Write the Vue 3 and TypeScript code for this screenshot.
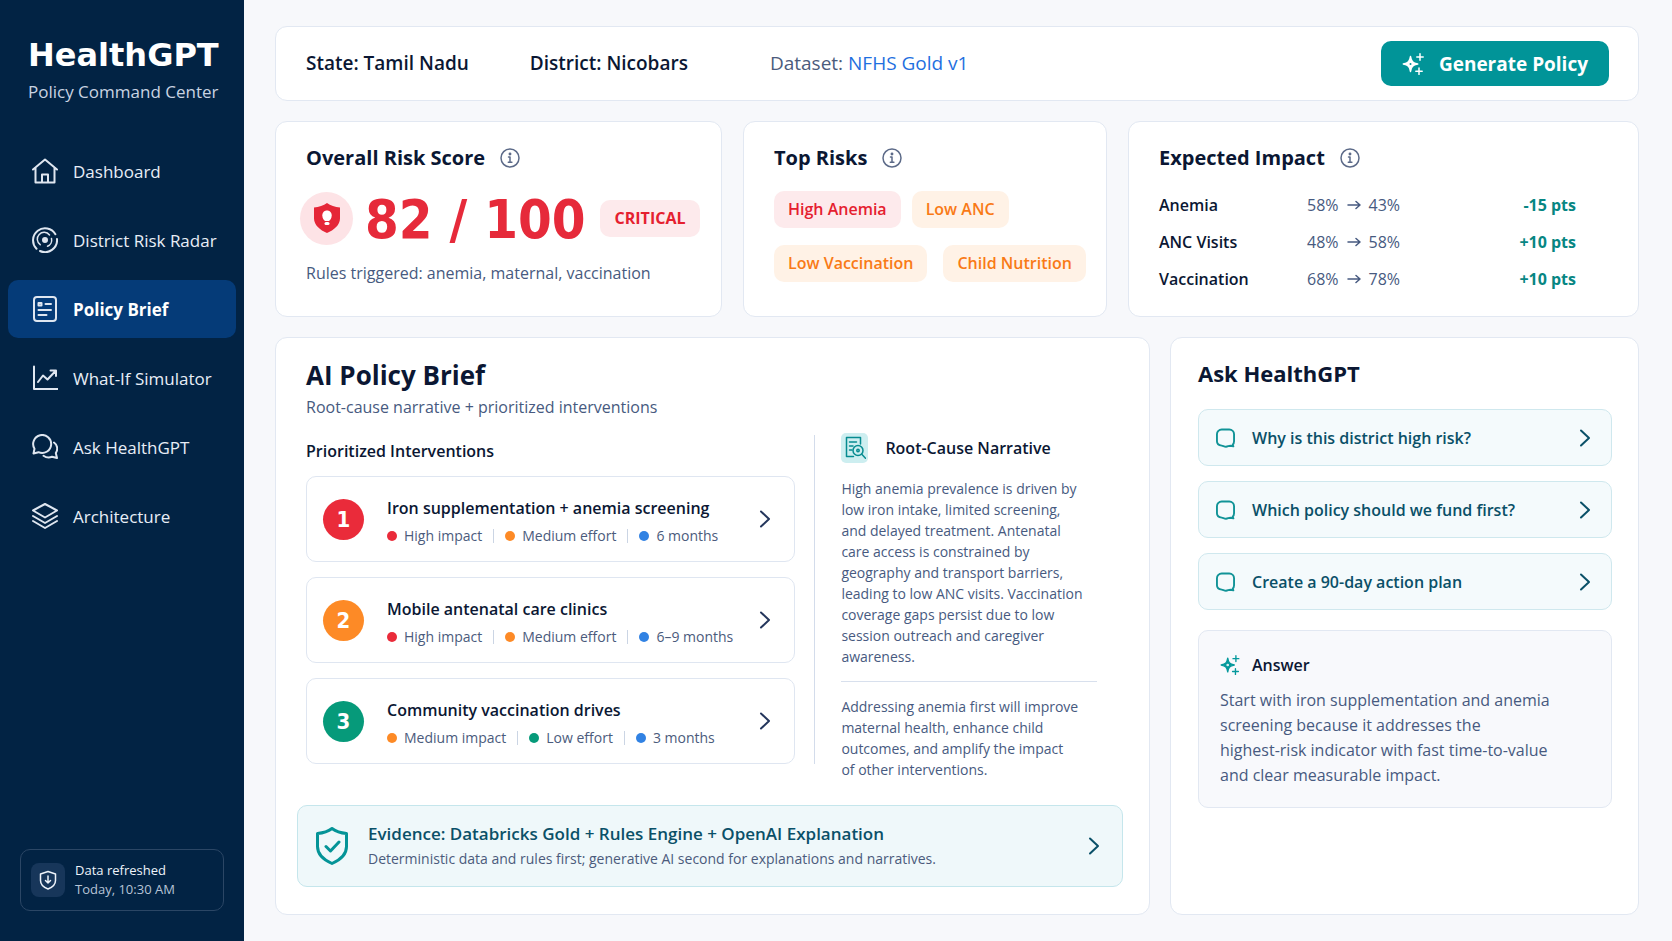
<script setup lang="ts">
interface Meta { tone: string; text: string }
interface Intervention { title: string; tone: string; meta: Meta[] }

const nav: { id: string; label: string }[] = [
  { id: 'home', label: 'Dashboard' },
  { id: 'radar', label: 'District Risk Radar' },
  { id: 'brief', label: 'Policy Brief' },
  { id: 'chart', label: 'What-If Simulator' },
  { id: 'chat', label: 'Ask HealthGPT' },
  { id: 'layers', label: 'Architecture' },
]
const active = 'brief'

const impact = [
  { name: 'Anemia', from: '58%', to: '43%', delta: '-15 pts' },
  { name: 'ANC Visits', from: '48%', to: '58%', delta: '+10 pts' },
  { name: 'Vaccination', from: '68%', to: '78%', delta: '+10 pts' },
]

const interventions: Intervention[] = [
  {
    title: 'Iron supplementation + anemia screening',
    tone: 'red',
    meta: [
      { tone: 'red', text: 'High impact' },
      { tone: 'orange', text: 'Medium effort' },
      { tone: 'blue', text: '6 months' },
    ],
  },
  {
    title: 'Mobile antenatal care clinics',
    tone: 'orange',
    meta: [
      { tone: 'red', text: 'High impact' },
      { tone: 'orange', text: 'Medium effort' },
      { tone: 'blue', text: '6–9 months' },
    ],
  },
  {
    title: 'Community vaccination drives',
    tone: 'green',
    meta: [
      { tone: 'orange', text: 'Medium impact' },
      { tone: 'green', text: 'Low effort' },
      { tone: 'blue', text: '3 months' },
    ],
  },
]

const questions: string[] = [
  'Why is this district high risk?',
  'Which policy should we fund first?',
  'Create a 90-day action plan',
]
</script>

<template>
  <div class="app">
    <aside class="sidebar">
      <div class="brand">
        <div class="brand-name">HealthGPT</div>
        <div class="brand-sub">Policy Command Center</div>
      </div>
      <nav class="nav" aria-label="Main">
        <a
          v-for="item in nav"
          :key="item.id"
          href="#"
          class="nav-item"
          :class="{ active: item.id === active }"
          :aria-current="item.id === active ? 'page' : undefined"
        >
          <svg class="nav-icon" viewBox="0 0 26 26" aria-hidden="true">
            <g v-if="item.id === 'home'">
              <path d="M1 11.500 13 1.500l12 10M3.500 9.500V24.500h19V9.500M10 24.500v-8h6v8" />
            </g>
            <g v-else-if="item.id === 'radar'">
              <path d="M4.500 21.700A12 12 0 1 1 23.400 7.200M25 12A12 12 0 0 1 8 24" />
              <path d="M8.200 17.700A6.800 6.800 0 1 1 17.500 8M19.500 11.500A6.800 6.800 0 0 1 15.500 19.300" stroke-width="1.500" />
              <circle cx="13" cy="13" r="2" fill="currentColor" />
            </g>
            <g v-else-if="item.id === 'brief'">
              <rect x="2" y="1" width="22" height="24" rx="3" />
              <path d="M6.500 7h3v2.500h-3zM13.500 8h5.500M6.500 14h12.500M6.500 19h8" />
            </g>
            <g v-else-if="item.id === 'chart'">
              <path d="M2 1.500v22.500h23.500M6 17l5-6.500 4.500 4L23.500 6M18.500 5.500h5.500v5.500" />
            </g>
            <g v-else-if="item.id === 'chat'">
              <path d="M1.500 19.500 2.500 14.700A9 9 0 1 1 6.500 18.200z" />
              <path d="M22 8.500a7.500 7.500 0 0 1 1.800 10.500l1.200 5-5-1.200a9 9 0 0 1-8.500-1" />
            </g>
            <g v-else>
              <path d="M13 1 25 7.500 13 14.500 1 7.500zM1 13l12 7 12-7M1 18l12 7 12-7" />
            </g>
          </svg>
          <span>{{ item.label }}</span>
        </a>
      </nav>
      <div class="refresh">
        <span class="refresh-icon">
          <svg viewBox="0 0 18 20" width="18" height="20" aria-hidden="true">
            <path d="M9 1.500 16.500 4v6.500c0 4-3.500 7-7.500 8.500-4-1.500-7.500-4.500-7.500-8.500V4zM9 6v7M6.500 10.500 9 13l2.500-2.500" />
          </svg>
        </span>
        <div>
          <div class="refresh-title">Data refreshed</div>
          <div class="refresh-time">Today, 10:30 AM</div>
        </div>
      </div>
    </aside>

    <main class="main">
      <header class="card topbar">
        <div class="context state">State: Tamil Nadu</div>
        <div class="context district">District: Nicobars</div>
        <div class="dataset">Dataset: <a href="#">NFHS Gold v1</a></div>
        <button type="button" class="generate">
          <svg viewBox="0 0 22 22" width="22" height="22" aria-hidden="true">
            <path d="M8.500 3.500c.8 5 2.200 6.500 7.200 7.500-5 1-6.400 2.500-7.200 7.500C7.700 13.500 6.300 12 1.300 11c5-1 6.400-2.500 7.200-7.500z" fill="currentColor" />
            <circle cx="8.500" cy="11" r="1" fill="#019498" stroke="none" />
            <path d="M18 .8v6.400M14.800 4h6.400M17 15v6.400M13.800 18.200h6.400" />
          </svg>
          <span>Generate Policy</span>
        </button>
      </header>

      <div class="summary">
        <section class="card panel">
          <div class="panel-head">
            <h2>Overall Risk Score</h2>
            <button type="button" class="info" aria-label="About overall risk score">
              <svg viewBox="0 0 20 20" width="20" height="20" aria-hidden="true"><circle cx="10" cy="10" r="9" /><path d="M8.500 9H10v5M8.300 14.300h3.600" /><circle cx="10" cy="6" r=".7" fill="currentColor" /></svg>
            </button>
          </div>
          <div class="score">
            <span class="score-icon">
              <svg viewBox="0 0 28 32" width="28" height="32" aria-hidden="true">
                <path d="M14 1C17.500 3.500 22 5 27 5.500v11C27 23 21 28 14 31 7 28 1 23 1 16.500v-11C6 5 10.500 3.500 14 1z" fill="#e52637" />
                <path d="M14 8.500c-3 0-4.700 2.200-4.700 5 0 2.300 1.200 4.300 2.700 5.500h4c1.500-1.200 2.700-3.200 2.700-5.500 0-2.800-1.700-5-4.700-5z" fill="#fff" />
                <rect x="11.500" y="20" width="5" height="3" rx="1.500" fill="#fff" />
              </svg>
            </span>
            <span class="score-value">82 / 100</span>
            <span class="chip red critical">CRITICAL</span>
          </div>
          <p class="rules">Rules triggered: anemia, maternal, vaccination</p>
        </section>

        <section class="card panel">
          <div class="panel-head">
            <h2>Top Risks</h2>
            <button type="button" class="info" aria-label="About top risks">
              <svg viewBox="0 0 20 20" width="20" height="20" aria-hidden="true"><circle cx="10" cy="10" r="9" /><path d="M8.500 9H10v5M8.300 14.300h3.600" /><circle cx="10" cy="6" r=".7" fill="currentColor" /></svg>
            </button>
          </div>
          <div class="chips">
            <div class="chip-row tight">
              <span class="chip red">High Anemia</span>
              <span class="chip orange">Low ANC</span>
            </div>
            <div class="chip-row">
              <span class="chip orange">Low Vaccination</span>
              <span class="chip orange">Child Nutrition</span>
            </div>
          </div>
        </section>

        <section class="card panel">
          <div class="panel-head">
            <h2>Expected Impact</h2>
            <button type="button" class="info" aria-label="About expected impact">
              <svg viewBox="0 0 20 20" width="20" height="20" aria-hidden="true"><circle cx="10" cy="10" r="9" /><path d="M8.500 9H10v5M8.300 14.300h3.600" /><circle cx="10" cy="6" r=".7" fill="currentColor" /></svg>
            </button>
          </div>
          <table class="impact">
            <tbody>
              <tr v-for="row in impact" :key="row.name">
                <th scope="row">{{ row.name }}</th>
                <td>
                  <span class="shift">
                    {{ row.from }}
                    <svg viewBox="0 0 14 10" width="14" height="10" role="img" aria-label="to"><path d="M1 5h12M9 1.500 13 5 9 8.500" /></svg>
                    {{ row.to }}
                  </span>
                </td>
                <td class="delta">{{ row.delta }}</td>
              </tr>
            </tbody>
          </table>
        </section>
      </div>

      <div class="detail">
        <section class="card brief">
          <div class="brief-head">
            <h1>AI Policy Brief</h1>
            <p>Root-cause narrative + prioritized interventions</p>
          </div>
          <div class="brief-body">
            <div class="plan">
              <h3>Prioritized Interventions</h3>
              <button v-for="(item, i) in interventions" :key="item.title" type="button" class="step">
                <span class="step-num" :class="item.tone">{{ i + 1 }}</span>
                <span class="step-text">
                  <span class="step-title">{{ item.title }}</span>
                  <span class="step-meta">
                    <span v-for="m in item.meta" :key="m.text" class="meta">
                      <i class="dot" :class="m.tone"></i>{{ m.text }}
                    </span>
                  </span>
                </span>
                <svg class="chevron" viewBox="0 0 12 18" aria-hidden="true"><path d="M2 1.500 10 9l-8 7.500" /></svg>
              </button>
            </div>
            <div class="narrative">
              <div class="narrative-head">
                <span class="narrative-icon">
                  <svg viewBox="0 0 22 24" width="22" height="24" aria-hidden="true">
                    <path d="M16.500 8V1.500h-14v19h7M5.500 6h7M5.500 10h3.500M5.500 14h2.500" />
                    <circle cx="14" cy="14.500" r="5" /><circle cx="14" cy="14.500" r="1.200" />
                    <path d="m18 18.500 3.500 3.700" />
                  </svg>
                </span>
                <h3>Root-Cause Narrative</h3>
              </div>
              <p>
                High anemia prevalence is driven by<br />low iron intake, limited screening,<br />and delayed treatment. Antenatal<br />care access is constrained by<br />geography and transport barriers,<br />leading to low ANC visits. Vaccination<br />coverage gaps persist due to low<br />session outreach and caregiver<br />awareness.
              </p>
              <hr />
              <p>
                Addressing anemia first will improve<br />maternal health, enhance child<br />outcomes, and amplify the impact<br />of other interventions.
              </p>
            </div>
          </div>
          <button type="button" class="evidence">
            <svg class="evidence-icon" viewBox="0 0 32 38" aria-hidden="true">
              <path d="M16 1.500c4 3 9 4.500 14.500 5v13C30.500 28 24 33 16 36.500 8 33 1.500 28 1.500 19.500v-13c5.500-.5 10.500-2 14.500-5zM10 19.500l4.500 4.500 8.500-9" />
            </svg>
            <span class="evidence-text">
              <span class="evidence-title">Evidence: Databricks Gold + Rules Engine + OpenAI Explanation</span>
              <span class="evidence-sub">Deterministic data and rules first; generative AI second for explanations and narratives.</span>
            </span>
            <svg class="chevron" viewBox="0 0 12 18" aria-hidden="true"><path d="M2 1.500 10 9l-8 7.500" /></svg>
          </button>
        </section>

        <section class="card ask">
          <h2>Ask HealthGPT</h2>
          <button v-for="q in questions" :key="q" type="button" class="question">
            <svg class="bubble" viewBox="0 0 20 20" aria-hidden="true">
              <path d="M6 1h8a5 5 0 0 1 5 5v7.500c0 1.800-.8 3-1.500 3.500l.8 1.800-3.300-.6c-1.500 0-2.500.8-4.500 1-2-.2-3-1-4.500-1.200-3-.2-5-2-5-4.500V6a5 5 0 0 1 5-5z" />
            </svg>
            <span>{{ q }}</span>
            <svg class="chevron" viewBox="0 0 12 18" aria-hidden="true"><path d="M2 1.500 10 9l-8 7.500" /></svg>
          </button>
          <div class="answer">
            <div class="answer-head">
              <svg viewBox="0 0 22 22" width="20" height="20" aria-hidden="true">
                <path d="M8.500 3.500c.8 5 2.200 6.500 7.200 7.500-5 1-6.400 2.500-7.200 7.500C7.700 13.500 6.300 12 1.300 11c5-1 6.400-2.500 7.200-7.500z" fill="currentColor" />
                <circle cx="8.500" cy="11" r="1.500" fill="#d8f1f2" stroke="none" />
                <path d="M17.500 .8v6.400M14.300 4h6.400M17 15v6.400M13.800 18.200h6.400" />
              </svg>
              <h3>Answer</h3>
            </div>
            <p>
              Start with iron supplementation and anemia<br />screening because it addresses the<br />highest-risk indicator with fast time-to-value<br />and clear measurable impact.
            </p>
          </div>
        </section>
      </div>
    </main>
  </div>
</template>

<style>
body {
  margin: 0;
  background: #f7f8fb;
}
</style>

<style scoped>
.app {
  display: grid;
  grid-template-columns: 244px minmax(0, 1fr);
  min-height: 100vh;
  font-family: "Open Sans", "Noto Sans", sans-serif;
  color: #0b1733;
}
.app *,
.app {
  box-sizing: border-box;
}
h1, h2, h3, p {
  margin: 0;
  font-weight: 600;
}
p {
  font-weight: 400;
}
button {
  font: inherit;
  color: inherit;
  cursor: pointer;
  text-align: left;
}
svg {
  flex: none;
  fill: none;
  stroke: currentColor;
  stroke-width: 2;
  stroke-linecap: round;
  stroke-linejoin: round;
}

/* Sidebar */
.sidebar {
  display: flex;
  flex-direction: column;
  padding: 36px 8px 30px;
  background: #022344;
  color: #eef3fa;
}
.brand {
  padding: 0 20px;
  white-space: nowrap;
}
.brand-name {
  font: 700 32px/38px "DejaVu Sans", sans-serif;
  color: #fff;
}
.brand-sub {
  margin-top: 6px;
  font-size: 17px;
  line-height: 24px;
  color: #c9d3e2;
}
.nav {
  display: flex;
  flex-direction: column;
  gap: 11px;
  margin-top: 38px;
}
.nav-item {
  display: flex;
  align-items: center;
  gap: 15px;
  height: 58px;
  padding: 0 24px;
  border-radius: 10px;
  color: #e8eef7;
  font-size: 17px;
  text-decoration: none;
  white-space: nowrap;
}
.nav-item.active {
  background: #053b78;
  color: #fff;
  font-weight: 700;
}
.nav-icon {
  width: 26px;
  height: 26px;
  color: #dfe6f0;
}
.refresh {
  display: flex;
  align-items: center;
  gap: 10px;
  height: 62px;
  margin: auto 12px 0;
  padding: 0 10px;
  border: 1px solid #2b4665;
  border-radius: 10px;
  font-size: 13px;
  line-height: 19px;
}
.refresh-icon {
  display: grid;
  place-items: center;
  width: 34px;
  height: 34px;
  border-radius: 8px;
  background: #17365a;
}
.refresh-icon svg {
  stroke-width: 1.5;
}
.refresh-time {
  color: #b7c4d6;
}

/* Main */
.main {
  display: flex;
  flex-direction: column;
  gap: 20px;
  padding: 26px 33px 26px 31px;
}
.card {
  background: #fff;
  border: 1px solid #e2e8f2;
  border-radius: 12px;
}
.topbar {
  display: flex;
  align-items: center;
  height: 75px;
  padding: 0 29px 0 30px;
  font-size: 19px;
  line-height: 24px;
  white-space: nowrap;
}
.context {
  font-weight: 600;
}
.context,
.dataset {
  padding-bottom: 2px;
}
.state {
  margin-right: 61px;
}
.district {
  margin-right: 82px;
}
.dataset {
  color: #4b5b7c;
}
.dataset a {
  color: #1f6fe0;
  text-decoration: none;
}
.generate {
  display: flex;
  align-items: center;
  gap: 15px;
  height: 45px;
  margin-left: auto;
  padding: 0 21px;
  border: 0;
  border-radius: 10px;
  background: #019498;
  color: #fff;
  font-size: 19px;
  font-weight: 700;
}
.generate svg {
  stroke-width: 1.5;
}

.summary {
  display: grid;
  grid-template-columns: minmax(0, 447fr) minmax(0, 364fr) minmax(0, 511fr);
  gap: 21px;
}
.panel {
  min-height: 196px;
  padding: 22px 20px 16px 30px;
}
.panel-head {
  display: flex;
  align-items: center;
  gap: 15px;
  height: 28px;
}
.panel-head h2 {
  font-size: 20px;
  font-weight: 700;
  line-height: 28px;
}
.info {
  display: flex;
  padding: 0;
  border: 0;
  background: none;
  color: #5c6a88;
}
.info svg {
  stroke-width: 1.5;
}
.score {
  display: flex;
  align-items: center;
  height: 56px;
  margin: 18px 0 0 -6px;
  white-space: nowrap;
}
.score-icon {
  display: grid;
  place-items: center;
  width: 53px;
  height: 53px;
  border-radius: 50%;
  background: #fde3e6;
}
.score-icon svg {
  stroke: none;
}
.score-value {
  margin: 0 14px 0 12px;
  padding-top: 4px;
  color: #e62a3a;
  font: 700 54px/56px "DejaVu Sans Condensed", "Noto Sans", sans-serif;
}
.rules {
  margin-top: 15px;
  color: #475a80;
  font-size: 16px;
  line-height: 24px;
}
.chip {
  display: inline-flex;
  align-items: center;
  height: 37px;
  padding: 0 14px 2px;
  border-radius: 10px;
  font-size: 16px;
  font-weight: 600;
  white-space: nowrap;
}
.chip.critical {
  padding: 0 15px;
  font-weight: 700;
}
.chip.red {
  background: #fdeaec;
  color: #e5202f;
}
.chip.orange {
  background: #fff2e6;
  color: #f97a16;
}
.chips {
  display: flex;
  flex-direction: column;
  gap: 17px;
  margin-top: 19px;
}
.chip-row {
  display: flex;
  gap: 16px;
}
.chip-row.tight {
  gap: 11px;
}
.impact {
  width: calc(100% - 42px);
  margin-top: 14px;
  border-collapse: collapse;
  font-size: 16px;
}
.impact tr {
  height: 37px;
}
.impact th,
.impact td {
  padding: 0;
  text-align: left;
  font-weight: 600;
}
.impact th {
  width: 148px;
}
.impact .shift {
  display: inline-flex;
  align-items: center;
  gap: 8px;
  color: #475a80;
  font-weight: 400;
}
.impact .shift svg {
  stroke-width: 1.5;
}
.impact .delta {
  text-align: right;
  font-weight: 700;
  color: #078683;
}

.detail {
  display: grid;
  grid-template-columns: minmax(0, 875fr) minmax(0, 469fr);
  gap: 20px;
  flex: 1;
}
.brief {
  display: flex;
  flex-direction: column;
  padding: 20px 26px 27px 21px;
}
.brief-head {
  padding-left: 9px;
}
.brief-head h1 {
  font-size: 26px;
  font-weight: 700;
  line-height: 34px;
}
.brief-head p {
  margin-top: 3px;
  color: #475a80;
  font-size: 16px;
  line-height: 24px;
}
.brief-body {
  display: grid;
  grid-template-columns: minmax(0, 490fr) minmax(0, 309fr);
  column-gap: 19px;
  margin-top: 16px;
  padding-left: 9px;
}
.plan {
  display: flex;
  flex-direction: column;
  gap: 15px;
}
.plan h3 {
  margin-top: 6px;
  font-size: 16px;
  line-height: 20px;
}
.step {
  display: flex;
  align-items: center;
  height: 86px;
  padding: 0 23px 0 16px;
  border: 1px solid #dfe6f1;
  border-radius: 10px;
  background: #fff;
}
.step-num {
  display: grid;
  place-items: center;
  flex: none;
  width: 41px;
  height: 41px;
  margin-right: 23px;
  border-radius: 50%;
  color: #fff;
  font: 700 22px/41px "DejaVu Sans Condensed", "Noto Sans", sans-serif;
}
.red { background: #ea2b3a; }
.orange { background: #fd8a26; }
.green { background: #069a7a; }
.blue { background: #3182e3; }
.step-text {
  display: flex;
  flex-direction: column;
  gap: 6px;
  flex: 1;
  padding-top: 6px;
  white-space: nowrap;
}
.step-title {
  font-size: 16px;
  font-weight: 600;
  line-height: 22px;
}
.step-meta {
  display: flex;
  font-size: 14px;
  line-height: 22px;
  color: #4b5b7c;
}
.meta {
  display: flex;
  align-items: center;
}
.meta + .meta::before {
  content: "";
  width: 1px;
  height: 14px;
  margin: 0 11px;
  background: #cbd5e4;
}
.dot {
  width: 10px;
  height: 10px;
  margin-right: 7px;
  border-radius: 50%;
}
.chevron {
  width: 12px;
  height: 18px;
  color: #24365c;
}
.narrative {
  height: 329px;
  padding: 0 26px;
  border-left: 1px solid #d3dceb;
  white-space: nowrap;
}
.narrative-head {
  display: flex;
  align-items: center;
  gap: 17px;
  height: 30px;
  margin-top: -2px;
}
.narrative-head h3 {
  font-size: 16px;
}
.narrative-icon {
  display: grid;
  place-items: center;
  width: 27px;
  height: 30px;
  border-radius: 5px;
  background: #cdeef0;
  color: #068b90;
}
.narrative-icon svg {
  stroke-width: 1.5;
}
.narrative p {
  color: #475a80;
  font-size: 14px;
  line-height: 21px;
}
.narrative-head + p {
  margin-top: 15px;
}
.narrative hr {
  height: 1px;
  margin: 14px 0;
  border: 0;
  background: #d8e0ed;
}
.evidence {
  display: flex;
  align-items: center;
  height: 82px;
  margin-top: auto;
  padding: 0 22px 0 18px;
  border: 1px solid #c5e6ec;
  border-radius: 10px;
  background: #eff8fa;
}
.evidence-icon {
  width: 32px;
  height: 38px;
  margin-right: 20px;
  color: #049497;
  stroke-width: 3;
}
.evidence-text {
  display: flex;
  flex-direction: column;
  flex: 1;
  white-space: nowrap;
}
.evidence-title {
  color: #0a5068;
  font-size: 17px;
  font-weight: 600;
  line-height: 26px;
}
.evidence-sub {
  color: #4b5b7c;
  font-size: 14px;
  line-height: 24px;
}
.evidence .chevron,
.question .chevron {
  color: #0a5068;
}

.ask {
  padding: 19px 26px 20px 27px;
}
.ask h2 {
  margin-bottom: 20px;
  font-size: 22px;
  font-weight: 700;
  line-height: 32px;
}
.question {
  display: flex;
  align-items: center;
  width: 100%;
  height: 57px;
  margin-bottom: 15px;
  padding: 0 20px 0 17px;
  border: 1px solid #cfe8ee;
  border-radius: 10px;
  background: #f4fafc;
  color: #0a5068;
  font-size: 16px;
  font-weight: 600;
  white-space: nowrap;
}
.question span {
  flex: 1;
}
.bubble {
  width: 19px;
  height: 20px;
  margin-right: 17px;
  color: #119397;
}
.answer {
  margin-top: 20px;
  padding: 21px 21px 19px;
  border: 1px solid #e2e8f2;
  border-radius: 10px;
  background: #f8f9fc;
}
.answer-head {
  display: flex;
  align-items: center;
  gap: 12px;
  height: 26px;
  color: #05999c;
}
.answer-head svg {
  stroke-width: 1.5;
}
.answer-head h3 {
  color: #0b1733;
  font-size: 16px;
}
.answer p {
  margin-top: 10px;
  color: #475a80;
  font-size: 16px;
  line-height: 25px;
  white-space: nowrap;
}
</style>
